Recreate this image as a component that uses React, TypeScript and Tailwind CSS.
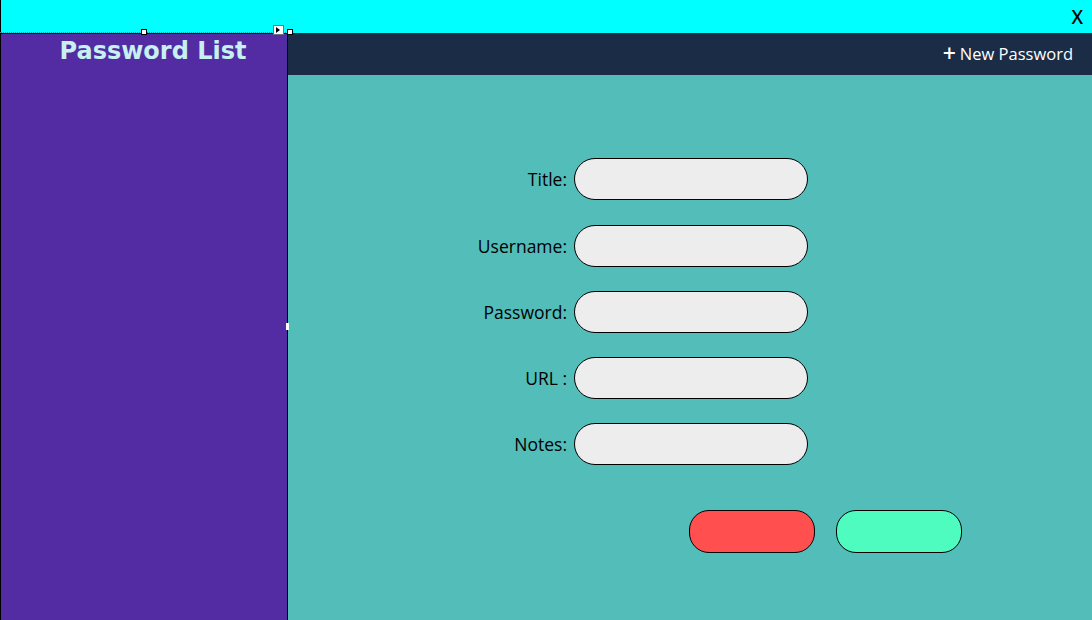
const fields = ['Title:', 'Username:', 'Password:', 'URL :', 'Notes:'];

export default function App() {
  return (
    <div className="relative w-[1092px] h-[620px] flex flex-col overflow-hidden bg-[#52bdb9] font-['Open_Sans',sans-serif]">
      {/* title bar */}
      <div className="h-[33px] bg-[#00ffff] border-l border-black flex justify-end items-start">
        <span className="mr-[9px] mt-[5px] text-[19px] leading-[24px] text-black font-medium font-['Noto_Sans',sans-serif]">X</span>
      </div>

      <div className="flex flex-1">
        {/* sidebar */}
        <aside className="w-[288px] bg-[#532ca3] border-l border-r border-black border-t">
          <h1 className="pl-[18px] text-center text-[24px] leading-[30px] mt-[2px] font-bold text-[#c6f1f0] font-['DejaVu_Sans',Verdana,sans-serif]">
            Password List
          </h1>
        </aside>

        <main className="flex-1 flex flex-col">
          <header className="h-[42px] bg-[#1b2c47] flex items-center justify-end pr-[19px]">
            <span className="text-white text-[16.5px] flex items-center gap-[4px] mt-[1px]">
              <span className="text-[23px] leading-none -mt-[2px] font-semibold">+</span>
              New Password
            </span>
          </header>

          <section className="pl-[159px] pt-[83px]">
            <div className="flex flex-col gap-[24px]">
              {fields.map((f, i) => (
                <div key={f} className={i === 0 ? 'flex items-center gap-[7px] mb-[1px]' : 'flex items-center gap-[7px]'}>
                  <label className="w-[120px] text-right text-[17.5px] text-black">{f}</label>
                  <input className="w-[234px] h-[42px] rounded-full bg-[#ededed] border border-black outline-none px-4" />
                </div>
              ))}
            </div>
            <div className="flex gap-[21px] ml-[242px] mt-[45px]">
              <button className="w-[126px] h-[43px] rounded-[20px] bg-[#ff4f4f] border border-black" />
              <button className="w-[126px] h-[43px] rounded-[20px] bg-[#4efcc0] border border-black" />
            </div>
          </section>
        </main>
      </div>

      {/* design-surface handles */}
      <div className="absolute left-0 top-[32px] w-[288px] border-t border-dotted border-gray-500" />
      <div className="absolute left-[141px] top-[29px] w-[6px] h-[6px] bg-white border border-black" />
      <div className="absolute left-[287px] top-[29px] w-[6px] h-[6px] bg-white border border-black" />
      <div className="absolute left-[273px] top-[25px] w-[11px] h-[10px] bg-white border border-gray-500 flex items-center justify-center">
        <svg width="5" height="6" viewBox="0 0 5 6"><path d="M0 0v6l4-3z" fill="black" /></svg>
      </div>
      <div className="absolute left-[286px] top-[323px] w-[3px] h-[7px] bg-white" />
    </div>
  );
}
